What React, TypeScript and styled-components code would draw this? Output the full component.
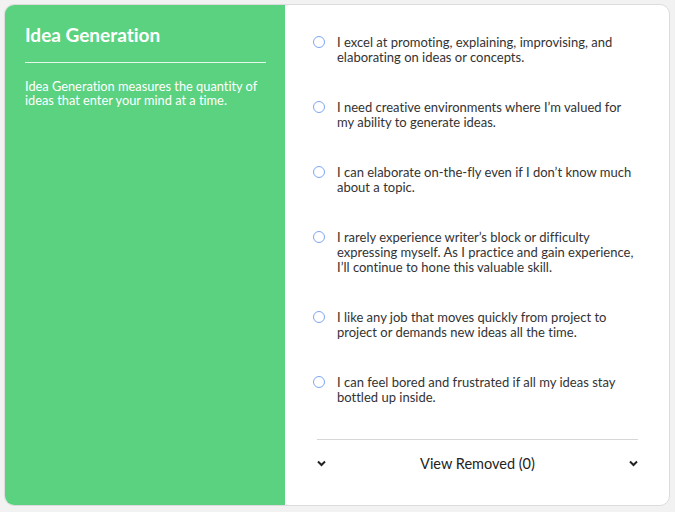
import React from "react";
import styled, { createGlobalStyle } from "styled-components";

const Global = createGlobalStyle`
  html, body { margin: 0; padding: 0; background: #f2f2f2; }
  body { font-family: Lato, "Open Sans", sans-serif; font-variant-ligatures: none; }
`;

const Page = styled.div`
  padding: 4px 5px 6px 4px;
  box-sizing: border-box;
  width: 675px;
  height: 512px;
`;

const Card = styled.div`
  display: flex;
  height: 502px;
  background: #fff;
  border: 1px solid #dcdcdc;
  border-radius: 10px;
  overflow: hidden;
  box-sizing: border-box;
`;

const Side = styled.div`
  width: 280px;
  flex: none;
  background: #5bd280;
  color: #fff;
  padding: 20px 19px 0 20px;
  box-sizing: border-box;
`;

const Title = styled.h1`
  margin: 0;
  font-family: Lato, sans-serif;
  font-size: 19px;
  font-weight: 700;
  line-height: 20px;
  padding-bottom: 17px;
  border-bottom: 1px solid rgba(255, 255, 255, 0.85);
`;

const Desc = styled.p`
  margin: 16px 0 0;
  font-size: 12.8px;
  line-height: 14px;
`;

const Main = styled.div`
  flex: 1;
  display: flex;
  flex-direction: column;
  padding: 30px 31px 0 28px;
`;

const List = styled.ul`
  list-style: none;
  margin: 0;
  padding: 0;
  display: flex;
  flex-direction: column;
  gap: 35px;
`;

const Item = styled.li`
  display: flex;
  align-items: flex-start;
  gap: 12px;
`;

const Radio = styled.span`
  flex: none;
  width: 12px;
  height: 12px;
  margin-top: 1px;
  border: 1.6px solid #7ea6f4;
  border-radius: 50%;
  box-sizing: border-box;
`;

const Text = styled.span`
  font-size: 13px;
  line-height: 15px;
  color: #333;
  max-width: 300px;
`;

const Footer = styled.div`
  margin: 34px 0 0 4px;
  border-top: 1px solid #d6d6d6;
  display: flex;
  align-items: center;
  justify-content: space-between;
  padding: 15px 0 0;
`;

const FooterLabel = styled.span`
  font-size: 14.5px;
  color: #222;
`;

const Chevron = () => (
  <svg width="9" height="7" viewBox="0 0 9 7">
    <path d="M1 1.5 L4.5 5 L8 1.5" fill="none" stroke="#222" strokeWidth="2" />
  </svg>
);

const items = [
  "I excel at promoting, explaining, improvising, and elaborating on ideas or concepts.",
  "I need creative environments where I’m valued for my ability to generate ideas.",
  "I can elaborate on-the-fly even if I don’t know much about a topic.",
  "I rarely experience writer’s block or difficulty expressing myself. As I practice and gain experience, I’ll continue to hone this valuable skill.",
  "I like any job that moves quickly from project to project or demands new ideas all the time.",
  "I can feel bored and frustrated if all my ideas stay bottled up inside.",
];

export default function App() {
  return (
    <>
      <Global />
      <Page>
        <Card>
          <Side>
            <Title>Idea Generation</Title>
            <Desc>Idea Generation measures the quantity of ideas that enter your mind at a time.</Desc>
          </Side>
          <Main>
            <List>
              {items.map((t) => (
                <Item key={t}>
                  <Radio />
                  <Text>{t}</Text>
                </Item>
              ))}
            </List>
            <Footer>
              <Chevron />
              <FooterLabel>View Removed (0)</FooterLabel>
              <Chevron />
            </Footer>
          </Main>
        </Card>
      </Page>
    </>
  );
}
